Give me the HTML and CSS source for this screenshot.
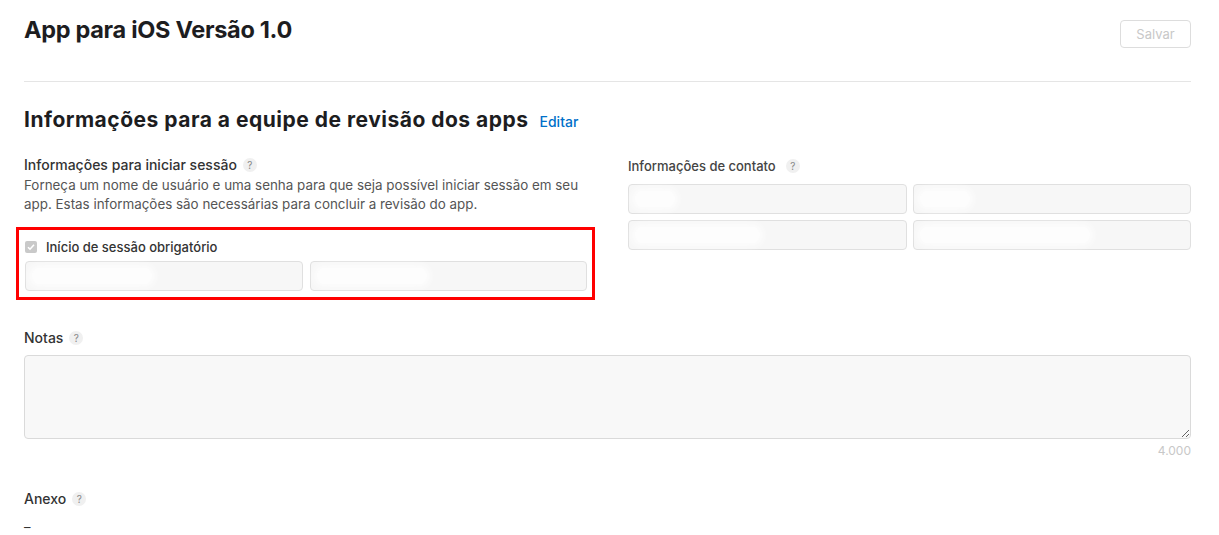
FILE: index.html
```html
<!DOCTYPE html>
<html>

<head>
    <title>App para iOS Versão 1.0</title>
    <meta charset="UTF-8">
    <link rel="stylesheet" href="styles.css">
</head>

<body>
    <div class="page">
        <div class="top">
            <h1>App para iOS Versão 1.0</h1>
            <button class="save" disabled>Salvar</button>
        </div>

        <div class="section-head">
            <h2>Informações para a equipe de revisão dos apps</h2>
            <a href="#" class="edit">Editar</a>
        </div>

        <div class="columns">
            <div class="col">
                <div class="label">Informações para iniciar sessão <span class="help">?</span></div>
                <p class="desc">Forneça um nome de usuário e uma senha para que seja possível iniciar sessão em seu app. Estas informações são necessárias para concluir a revisão do app.</p>
                <div class="highlight">
                    <label class="check">
                        <span class="box"><svg width="10" height="10" viewBox="0 0 10 10"><path d="M2 5.2l2 2 4-4.4" fill="none" stroke="#fff" stroke-width="1.6"/></svg></span>
                        Início de sessão obrigatório
                    </label>
                    <div class="pair">
                        <div class="field"><span class="blob" style="width: 120px"></span></div>
                        <div class="field"><span class="blob" style="width: 110px"></span></div>
                    </div>
                </div>
            </div>
            <div class="col">
                <div class="label contact">Informações de contato <span class="help">?</span></div>
                <div class="grid">
                    <div class="field"><span class="blob" style="width: 40px"></span></div>
                    <div class="field"><span class="blob" style="width: 50px"></span></div>
                    <div class="field"><span class="blob" style="width: 125px"></span></div>
                    <div class="field"><span class="blob" style="width: 170px"></span></div>
                </div>
            </div>
        </div>

        <div class="notes">
            <div class="label">Notas <span class="help">?</span></div>
            <textarea class="area" readonly></textarea>
            <div class="counter">4.000</div>
        </div>

        <div class="attach">
            <div class="label">Anexo <span class="help">?</span></div>
            <div class="dash">–</div>
        </div>
    </div>
</body>

</html>
```

FILE: styles.css
```css
body {
    margin: 0;
    font-family: Inter, "Liberation Sans", sans-serif;
    color: #333;
    background: #fff;
}
.page {
    padding: 0 28px 0 24px;
}
.top {
    display: flex;
    justify-content: space-between;
    align-items: flex-start;
    padding-top: 17px;
    padding-bottom: 33px;
    border-bottom: 1px solid #e5e5e5;
}
h1 {
    margin: 0;
    font-size: 23.5px;
    font-weight: 700;
    color: #1d1d1f;
    letter-spacing: -0.3px;
    line-height: 26px;
}
.save {
    margin-top: 3px;
    width: 71px;
    height: 28px;
    background: #fff;
    border: 1px solid #ddd;
    border-radius: 4px;
    color: #c8c8c8;
    font-family: inherit;
    font-size: 13px;
}
.section-head {
    display: flex;
    align-items: baseline;
    gap: 11px;
    margin-top: 24px;
}
h2 {
    margin: 0;
    font-size: 21px;
    font-weight: 700;
    color: #1d1d1f;
    letter-spacing: 0.5px;
    line-height: 28px;
}
.edit {
    color: #0070c9;
    font-size: 14px;
    font-weight: 500;
    text-decoration: none;
}
.columns {
    display: grid;
    grid-template-columns: 564px 1fr;
    gap: 40px;
    margin-top: 22px;
}
.label {
    font-size: 14px;
    font-weight: 500;
    color: #333;
    line-height: 18px;
    display: flex;
    align-items: center;
    gap: 6px;
}
.label.contact {
    font-size: 13px;
    color: #444;
    gap: 10px;
    margin-top: 1px;
}
.help {
    display: inline-flex;
    align-items: center;
    justify-content: center;
    width: 14px;
    height: 14px;
    border-radius: 50%;
    background: #f0f0f0;
    color: #888;
    font-size: 10px;
    font-weight: 400;
}
.desc {
    margin: 2px 0 0;
    font-size: 13.4px;
    line-height: 19px;
    color: #555;
}
.highlight {
    box-sizing: border-box;
    margin: 13px 0 0 -8px;
    width: 579px;
    border: 3px solid #ff0000;
    padding: 8px 5px 6px 6px;
}
.check {
    display: flex;
    align-items: center;
    gap: 9px;
    font-size: 13px;
    font-weight: 500;
    color: #333;
    height: 18px;
}
.box {
    display: inline-flex;
    align-items: center;
    justify-content: center;
    width: 12px;
    height: 12px;
    border-radius: 2px;
    background: #c9c9c9;
}
.pair {
    display: grid;
    grid-template-columns: 1fr 1fr;
    gap: 7px;
    margin-top: 5px;
}
.field {
    box-sizing: border-box;
    height: 30px;
    background: #f7f7f7;
    border: 1px solid #e0e0e0;
    border-radius: 4px;
    display: flex;
    align-items: center;
    padding-left: 6px;
}
.blob {
    height: 16px;
    border-radius: 8px;
    background: #fdfdfd;
    box-shadow: 0 0 6px 3px #fdfdfd;
}
.grid {
    display: grid;
    grid-template-columns: 1fr 1fr;
    gap: 6px 6px;
    margin-top: 9px;
}
.notes {
    margin-top: 29px;
}
.area {
    display: block;
    box-sizing: border-box;
    width: 100%;
    height: 84px;
    margin-top: 8px;
    background: #f8f8f8;
    border: 1px solid #dadada;
    border-radius: 4px;
    resize: vertical;
}
.counter {
    text-align: right;
    font-size: 12px;
    color: #c8c8c8;
    margin-top: 4px;
}
.attach {
    margin-top: 32px;
}
.dash {
    margin-top: 11px;
    font-size: 13px;
    color: #333;
}
```
